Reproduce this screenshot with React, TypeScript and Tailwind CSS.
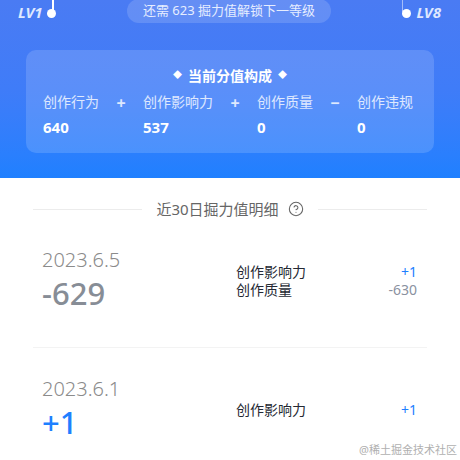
import { CircleHelp } from 'lucide-react';

const parts = [
  { label: '创作行为', value: '640' },
  { label: '创作影响力', value: '537' },
  { label: '创作质量', value: '0' },
  { label: '创作违规', value: '0' },
];
const ops = ['+', '+', '−'];

const records = [
  {
    date: '2023.6.5',
    total: '-629',
    up: false,
    items: [
      { name: '创作影响力', delta: '+1' },
      { name: '创作质量', delta: '-630' },
    ],
  },
  {
    date: '2023.6.1',
    total: '+1',
    up: true,
    items: [{ name: '创作影响力', delta: '+1' }],
  },
];

export default function App() {
  return (
    <div className="relative h-[460px] w-[460px] overflow-hidden bg-white font-['Noto_Sans','Noto_Sans_CJK_SC',sans-serif]">
      {/* 等级进度头部 */}
      <header className="h-[178px] bg-gradient-to-b from-[#4a7bf3] via-[#3f7cf8] to-[#1f80ff] px-[26px]">
        <div className="flex h-[24px] items-center justify-between">
          <div className="flex items-center gap-[4px] -ml-[8px]">
            <span className="text-[15px] font-bold italic text-[#dfe8ff]">LV1</span>
            <span className="relative mt-[2px] h-[9px] w-[9px] rounded-full bg-white">
              <span className="absolute bottom-[6px] left-[5px] h-[14px] w-[2px] rounded bg-white" />
            </span>
          </div>
          <div className="rounded-full bg-white/15 px-[16px] py-[2px] text-[13px] text-[#e6edff] -mt-[2px]">
            还需 623 掘力值解锁下一等级
          </div>
          <div className="flex items-center gap-[5px] -mr-[7px]">
            <span className="relative mt-[2px] h-[9px] w-[9px] rounded-full bg-white">
              <span className="absolute bottom-[6px] left-[0px] h-[12px] w-[1px] bg-white/50" />
            </span>
            <span className="text-[15px] font-bold italic text-[#dfe8ff]">LV8</span>
          </div>
        </div>

        <div className="mt-[26px] rounded-[10px] bg-white/15 px-[17px] pb-[15px] pt-[14px]">
          <div className="flex h-[22px] items-center justify-center gap-[6px] text-[14px] font-semibold text-white">
            <span className="text-[9px]">◆</span>
            <span>当前分值构成</span>
            <span className="text-[9px]">◆</span>
          </div>
          <div className="mt-[5px] flex">
            {parts.map((p, i) => (
              <div key={p.label} className="flex">
                <div className="flex flex-col whitespace-nowrap">
                  <span className="h-[22px] text-[14px] leading-[22px] text-white/80">{p.label}</span>
                  <span className="mt-[3px] h-[22px] text-[15px] font-bold leading-[22px] text-white">{p.value}</span>
                </div>
                {i < ops.length && (
                  <span className="flex h-[24px] w-[44px] items-center justify-center text-[16px] font-bold text-white/80">
                    {ops[i]}
                  </span>
                )}
              </div>
            ))}
          </div>
        </div>
      </header>

      {/* 近30日明细 */}
      <section className="px-[33px]">
        <div className="mt-[20px] flex items-center gap-[14px]">
          <div className="h-px flex-1 bg-[#ececec]" />
          <div className="flex items-center gap-[9px] text-[15px] text-[#666]">
            <span>近30日掘力值明细</span>
            <CircleHelp size={16} strokeWidth={1.6} />
          </div>
          <div className="h-px flex-1 bg-[#ececec]" />
        </div>

        {records.map((r, idx) => (
          <div key={r.date}>
            {idx > 0 && <div className="h-px bg-[#f3f3f3]" />}
            <div className={`flex items-center pl-[9px] pr-[10px] ${idx === 0 ? 'pt-[26px] pb-[36px]' : 'pt-[28px]'}`}>
              <div className="w-[194px]">
                <div className="text-[20px] font-light leading-[26px] text-[#8b8b8b]">{r.date}</div>
                <div
                  className={`mt-[2px] text-[31px] font-medium leading-[36px] ${r.up ? 'text-[#1e80ff]' : 'text-[#878d96]'}`}
                >
                  {r.total}
                </div>
              </div>
              <div className="mt-[4px] flex-1">
                {r.items.map((it) => (
                  <div key={it.name} className="flex justify-between text-[14px] leading-[18px]">
                    <span className="text-[#252933]">{it.name}</span>
                    <span className={it.delta.startsWith('+') ? 'text-[#1e80ff]' : 'text-[#8a919f]'}>{it.delta}</span>
                  </div>
                ))}
              </div>
            </div>
          </div>
        ))}
      </section>

      <div className="absolute bottom-[2px] right-[3px] text-[11px] text-[#b0b0b0]">@稀土掘金技术社区</div>
    </div>
  );
}
